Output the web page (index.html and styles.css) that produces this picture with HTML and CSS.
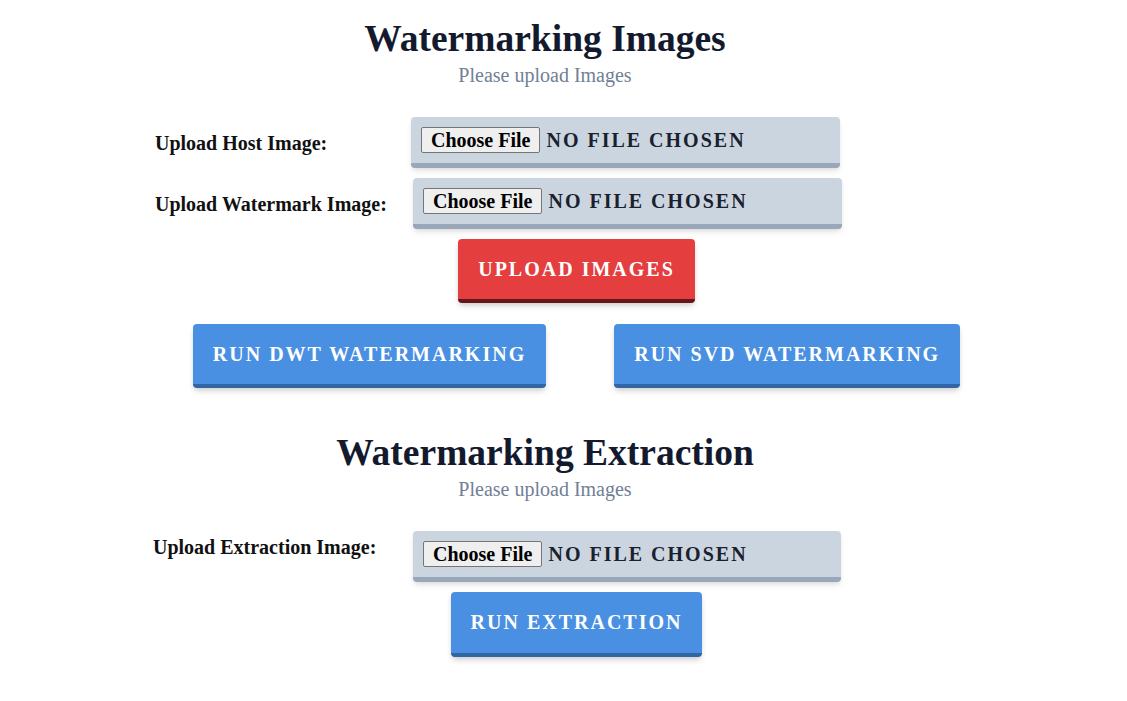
FILE: index.html
```html
<!DOCTYPE html>
<html lang="en">
<head>
<meta charset="utf-8">
<title>Watermarking Images</title>
<link rel="stylesheet" href="styles.css">
</head>
<body>
<div class="page">
  <section class="section">
    <h1 class="title">Watermarking Images</h1>
    <p class="subtitle">Please upload Images</p>
    <div class="form">
      <div class="row">
        <label class="label">Upload Host Image:</label>
        <div class="file-box">
          <button class="choose" type="button">Choose File</button>
          <span class="no-file">No file chosen</span>
        </div>
      </div>
      <div class="row row-b">
        <label class="label">Upload Watermark Image:</label>
        <div class="file-box">
          <button class="choose" type="button">Choose File</button>
          <span class="no-file">No file chosen</span>
        </div>
      </div>
      <div class="actions actions-first">
        <button class="btn btn-red" type="button">Upload Images</button>
      </div>
      <div class="actions actions-pair">
        <button class="btn btn-blue" type="button">Run DWT Watermarking</button>
        <button class="btn btn-blue" type="button">Run SVD Watermarking</button>
      </div>
    </div>
  </section>
  <section class="section section-2">
    <h1 class="title">Watermarking Extraction</h1>
    <p class="subtitle">Please upload Images</p>
    <div class="form">
      <div class="row row-c">
        <label class="label">Upload Extraction Image:</label>
        <div class="file-box">
          <button class="choose" type="button">Choose File</button>
          <span class="no-file">No file chosen</span>
        </div>
      </div>
      <div class="actions">
        <button class="btn btn-blue btn-tall" type="button">Run Extraction</button>
      </div>
    </div>
  </section>
</div>
</body>
</html>
```

FILE: styles.css
```css
* { box-sizing: border-box; }

body {
  margin: 0;
  background: #ffffff;
  font-family: "Liberation Serif", "Times New Roman", serif;
  color: #1a202c;
}

.page {
  width: 1090px;
}

.section {
  padding-top: 19px;
}

.section-2 {
  padding-top: 45px;
}

.title {
  margin: 0 0 2px;
  text-align: center;
  font-size: 37.5px;
  line-height: 40px;
  font-weight: 700;
  color: #141a2e;
}

.subtitle {
  margin: 0;
  text-align: center;
  font-size: 20px;
  line-height: 28px;
  color: #718096;
}

.form {
  margin-left: 155px;
  width: 843px;
  padding-top: 28px;
}

.row {
  display: flex;
  align-items: center;
  margin-bottom: 10px;
}

.label {
  width: 256px;
  font-size: 20px;
  line-height: 28px;
  font-weight: 700;
  color: #111111;
}

.row-b .label { width: 258px; }

.row-c {
  margin-left: -2px;
  align-items: flex-start;
}

.row-c .label {
  width: 260px;
  margin-top: 2px;
}

.file-box {
  display: flex;
  align-items: center;
  width: 429px;
  height: 51px;
  padding: 10px;
  background: #cbd5e0;
  border-bottom: 5px solid #9aa7ba;
  border-radius: 4px;
  box-shadow: 0 4px 6px -1px rgba(0, 0, 0, 0.1), 0 2px 4px -1px rgba(0, 0, 0, 0.06);
}

.row-c .file-box { width: 428px; }

.choose {
  height: 26px;
  padding: 0 9px;
  margin: 0 6px 0 0;
  font-family: inherit;
  font-size: 20px;
  line-height: 22px;
  font-weight: 700;
  color: #000000;
  background: #efefef;
  border: 1px solid #767676;
  border-radius: 2px;
}

.no-file {
  font-size: 20px;
  font-weight: 700;
  text-transform: uppercase;
  letter-spacing: 0.1em;
  color: #1a202c;
}

.actions {
  display: flex;
  justify-content: center;
  margin-bottom: 21px;
}

.actions-first {
  margin-top: 1px;
}

.actions-pair {
  gap: 68px;
  margin-bottom: 0;
}

.btn {
  padding: 16px 20px;
  font-family: inherit;
  font-size: 20px;
  line-height: 28px;
  font-weight: 700;
  text-transform: uppercase;
  letter-spacing: 0.1em;
  color: #ffffff;
  border: 0;
  border-radius: 4px;
  box-shadow: 0 4px 6px -1px rgba(0, 0, 0, 0.15), 0 2px 4px -1px rgba(0, 0, 0, 0.08);
}

.btn-tall {
  padding-bottom: 17px;
}

.btn-red {
  background: #e53e3e;
  border-bottom: 4px solid #63171b;
}

.btn-blue {
  background: #4a90e2;
  border-bottom: 4px solid #3265a3;
}
```
